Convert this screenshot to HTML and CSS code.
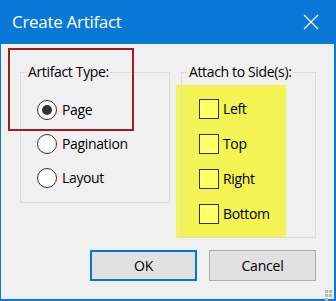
FILE: index.html
```html
<!DOCTYPE html>
<html>
<head>
<meta charset="utf-8">
<link rel="stylesheet" href="styles.css">
</head>
<body>
<div class="window">
  <div class="titlebar">
    <span class="title">Create Artifact</span>
    <svg class="close" width="16" height="16" viewBox="0 0 16 16"><path d="M1 1 L15 15 M15 1 L1 15" stroke="#fff" stroke-width="1.2" fill="none"/></svg>
  </div>
  <div class="content">
    <div class="groups">
      <fieldset class="group group-left">
        <legend>Artifact Type:</legend>
        <div class="options">
          <label class="opt"><span class="radio checked"></span>Page</label>
          <label class="opt"><span class="radio"></span>Pagination</label>
          <label class="opt"><span class="radio"></span>Layout</label>
        </div>
      </fieldset>
      <fieldset class="group group-right">
        <legend>Attach to Side(s):</legend>
        <div class="options checks">
          <label class="opt"><span class="check"></span>Left</label>
          <label class="opt"><span class="check"></span>Top</label>
          <label class="opt"><span class="check"></span>Right</label>
          <label class="opt"><span class="check"></span>Bottom</label>
        </div>
      </fieldset>
    </div>
    <div class="buttons">
      <button class="btn btn-default">OK</button>
      <button class="btn">Cancel</button>
    </div>
    <div class="grip"><i></i><i></i><i></i><i></i><i></i></div>
    <div class="mark-red"></div>
    <div class="mark-yellow"></div>
  </div>
</div>
</body>
</html>
```

FILE: styles.css
```css
html, body {
  margin: 0;
  padding: 0;
  background: #f0f0f0;
}
.window {
  width: 336px;
  height: 301px;
  box-sizing: border-box;
  display: flex;
  flex-direction: column;
  font-family: "Segoe UI", "Open Sans", sans-serif;
  color: #000;
}
.titlebar {
  height: 44px;
  flex: none;
  background: #0a78d7;
  display: flex;
  align-items: center;
  justify-content: space-between;
  padding: 0 17px 0 12px;
}
.title {
  color: #fff;
  font-size: 17px;
  letter-spacing: -0.3px;
  padding-bottom: 1px;
}
.close {
  display: block;
  margin-top: -1px;
}
.content {
  position: relative;
  flex: 1;
  background: #f0f0f0;
  border-left: 1px solid #0a78d7;
  border-right: 2px solid #0a78d7;
  border-bottom: 2px solid #0a78d7;
  padding: 20px 18px 0 19px;
  font-size: 14px;
  letter-spacing: -0.35px;
}
.groups {
  display: flex;
  align-items: flex-start;
  gap: 11px;
}
.group {
  margin: 0;
  padding: 0;
  border: 1px solid #dcdcdc;
  box-sizing: border-box;
  position: relative;
  z-index: 2;
}
.group legend {
  padding: 0 1px;
  margin-left: 6px;
  line-height: 16px;
  height: 16px;
}
.group-left {
  width: 151px;
  height: 139px;
}
.group-right {
  width: 136px;
  height: 174px;
  background: transparent;
}
.options {
  display: flex;
  flex-direction: column;
  gap: 14px;
  padding: 20px 0 0 16px;
}
.checks {
  padding: 19px 0 0 17px;
  gap: 15px;
}
.opt {
  display: flex;
  align-items: center;
  height: 20px;
  line-height: 20px;
  gap: 5px;
}
.checks .opt {
  gap: 4px;
}
.radio {
  width: 20px;
  height: 20px;
  box-sizing: border-box;
  border: 1.5px solid #333;
  border-radius: 50%;
  background: #fff;
  position: relative;
  flex: none;
}
.radio.checked::after {
  content: "";
  position: absolute;
  left: 3.5px;
  top: 3.5px;
  width: 10px;
  height: 10px;
  border-radius: 50%;
  background: #333;
}
.check {
  width: 20px;
  height: 20px;
  box-sizing: border-box;
  border: 1px solid #333;
  background: #ffff66;
  flex: none;
}
.buttons {
  display: flex;
  justify-content: flex-end;
  gap: 12px;
  margin-top: 12px;
  position: relative;
  z-index: 2;
}
.btn {
  width: 107px;
  height: 31px;
  box-sizing: border-box;
  background: #e1e1e1;
  border: 1px solid #adadad;
  font-family: "Segoe UI", "Open Sans", sans-serif;
  font-size: 14px;
  letter-spacing: -0.2px;
  color: #000;
  padding: 0;
  margin: 0;
}
.btn-default {
  border: 2px solid #0078d7;
}
.grip {
  position: absolute;
  right: 1px;
  bottom: 1px;
  width: 8px;
  height: 8px;
  display: grid;
  grid-template-columns: 3px 3px;
  gap: 1px;
}
.grip i {
  display: block;
  width: 3px;
  height: 3px;
  background: #b8b8b8;
}
.mark-red {
  position: absolute;
  left: 7px;
  top: 4px;
  width: 126px;
  height: 83px;
  border: 2px solid #a01c25;
  box-sizing: border-box;
  z-index: 3;
  pointer-events: none;
}
.mark-yellow {
  position: absolute;
  left: 175px;
  top: 41px;
  width: 110px;
  height: 153px;
  background: #f3f354;
  z-index: 1;
}
```
